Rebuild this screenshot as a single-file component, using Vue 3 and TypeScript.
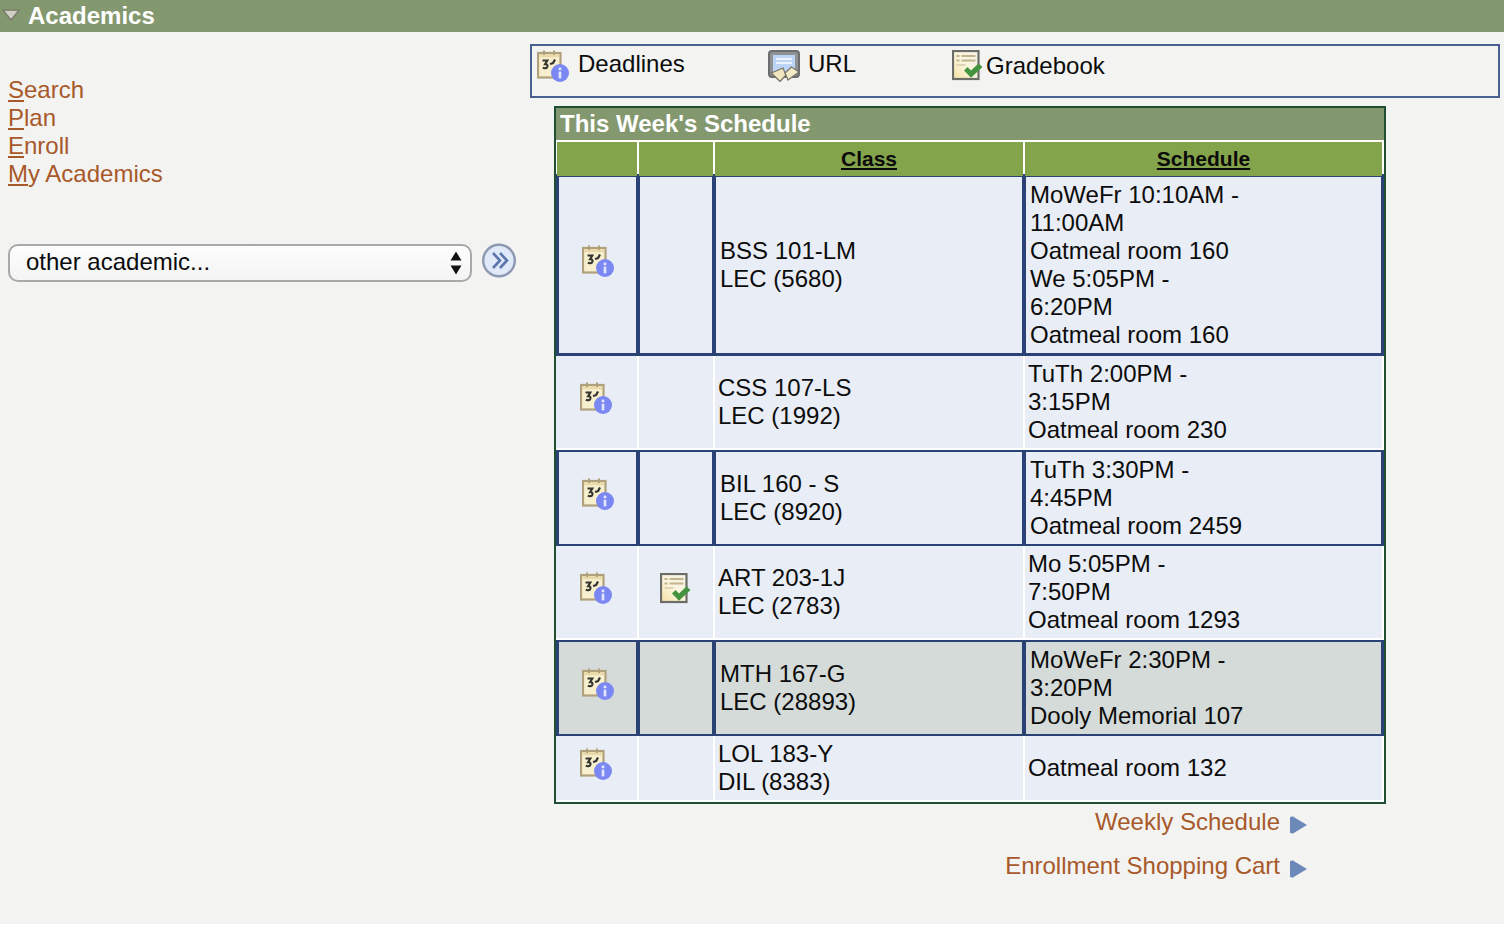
<script setup lang="ts">
interface Row {
  lines: string[];
  schedule: string[];
  kind: string;
  grade?: boolean;
}
const rows: Row[] = [
  { lines: ['BSS 101-LM', 'LEC (5680)'], schedule: ['MoWeFr 10:10AM -', '11:00AM', 'Oatmeal room 160', 'We 5:05PM -', '6:20PM', 'Oatmeal room 160'], kind: 'hl first' },
  { lines: ['CSS 107-LS', 'LEC (1992)'], schedule: ['TuTh 2:00PM -', '3:15PM', 'Oatmeal room 230'], kind: 'plain' },
  { lines: ['BIL 160 - S', 'LEC (8920)'], schedule: ['TuTh 3:30PM -', '4:45PM', 'Oatmeal room 2459'], kind: 'hl' },
  { lines: ['ART 203-1J', 'LEC (2783)'], schedule: ['Mo 5:05PM -', '7:50PM', 'Oatmeal room 1293'], kind: 'plain', grade: true },
  { lines: ['MTH 167-G', 'LEC (28893)'], schedule: ['MoWeFr 2:30PM -', '3:20PM', 'Dooly Memorial 107'], kind: 'hl gray' },
  { lines: ['LOL 183-Y', 'DIL (8383)'], schedule: ['Oatmeal room 132'], kind: 'plain' },
];
const navLinks = [
  { first: 'S', rest: 'earch' },
  { first: 'P', rest: 'lan' },
  { first: 'E', rest: 'nroll' },
  { first: 'M', rest: 'y', tail: ' Academics' },
];
</script>

<template>
  <svg class="defs" width="0" height="0" aria-hidden="true">
    <defs>
      <linearGradient id="paper" x1="0" y1="1" x2="1" y2="0">
        <stop offset="0" stop-color="#f5e2a2" />
        <stop offset="0.5" stop-color="#fbf5de" />
        <stop offset="1" stop-color="#f3f0e6" />
      </linearGradient>
      <symbol id="cal" viewBox="0 0 32 32">
        <rect x="1" y="3" width="22.5" height="24.5" fill="#f8efcf" stroke="#b1a07c" stroke-width="2.2" />
        <rect x="2.2" y="4.2" width="20" height="3" fill="#ead9a9" />
        <path d="M7 0.5V5M17 0.5V5" stroke="#b1a07c" stroke-width="2" />
        <path d="M5.5 10.5h4.8l-2.2 3.6c2.2 0 2.7 1.2 2.3 2.6-.4 1.5-2.6 1.9-4.6 1.1" fill="none" stroke="#35352f" stroke-width="2.1" />
        <path d="M13 14l3.5-1M18 9.5l-2 3.6" fill="none" stroke="#333" stroke-width="2.2" />
        <circle cx="23" cy="23" r="9" fill="#7b88f3" />
        <rect x="21.7" y="17.6" width="2.6" height="2.6" fill="#e4e8ff" />
        <rect x="21.7" y="21.6" width="2.6" height="6.8" fill="#e4e8ff" />
      </symbol>
      <symbol id="grade" viewBox="0 0 31 31">
        <rect x="1" y="1" width="25.5" height="28" fill="url(#paper)" stroke="#6c6c68" stroke-width="2.2" />
        <path d="M4.5 6h3M9.5 6h14M4.5 10.5h3M9.5 10.5h14" stroke="#c2b48d" stroke-width="2.2" />
        <path d="M4.5 15h9" stroke="#d9cfae" stroke-width="1.6" />
        <path d="M12 20.5L15.5 17 19 20.5 26.5 13.5 30.5 17 19 27.8z" fill="#43933f" />
      </symbol>
      <symbol id="url" viewBox="0 0 32 32">
        <rect x="1" y="1" width="30" height="26" rx="3" fill="#8f9192" stroke="#6b6d6f" stroke-width="2" />
        <rect x="5" y="5" width="22" height="18" fill="#bcd4f5" />
        <path d="M8 9h16M8 13h16" stroke="#eef4fd" stroke-width="2" />
        <path d="M3.3 23L15 18 18 25 12 31.5z" fill="#f0e6bd" stroke="#77756a" stroke-width="1.3" />
        <path d="M17 23L23.5 17 31 22 20 30z" fill="#f4ecc9" stroke="#77756a" stroke-width="1.3" />
      </symbol>
      <symbol id="tri" viewBox="0 0 17 18">
        <path d="M0 1.2L2.5 0.3 17 9 2.5 17.7 0 16.8z" fill="#6d89ba" />
      </symbol>
    </defs>
  </svg>

  <div class="page">
    <header class="band">
      <svg class="caret" width="18" height="12" viewBox="0 0 18 12">
        <path d="M1 1.2h16L9 11z" fill="#cfcfc3" stroke="#77776a" stroke-width="1.3" />
      </svg>
      <span>Academics</span>
    </header>

    <div class="main">
      <aside class="side">
        <nav class="nav">
          <a v-for="l in navLinks" :key="l.first" class="link"><u>{{ l.first }}</u>{{ l.rest }}{{ l.tail }}</a>
        </nav>
        <div class="picker">
          <div class="select-wrap">
            <span class="select-text">other academic...</span>
            <svg class="updown" width="12" height="24" viewBox="0 0 12 24">
              <path d="M6 0.5L11.5 9.5H0.5zM0.5 14.5H11.5L6 23.5z" fill="#111" />
            </svg>
          </div>
          <svg class="go" width="34" height="36" viewBox="0 0 34 36">
            <circle cx="17" cy="17.5" r="15.8" fill="#e0e9f8" stroke="#8d99b3" stroke-width="2.4" />
            <path d="M11 10l7 7.5-7 7.5M18 10l7 7.5-7 7.5" fill="none" stroke="#5b76ab" stroke-width="2.6" />
          </svg>
        </div>
      </aside>

      <section class="content">
        <div class="toolbar">
          <div class="tool tool-a"><svg class="ic32"><use href="#cal" /></svg><span>Deadlines</span></div>
          <div class="tool tool-b"><svg class="ic32"><use href="#url" /></svg><span>URL</span></div>
          <div class="tool tool-c"><svg class="ic-g"><use href="#grade" /></svg><span class="low">Gradebook</span></div>
        </div>

        <div class="table">
          <div class="title">This Week's Schedule</div>
          <div class="row head">
            <div class="cell"></div>
            <div class="cell"></div>
            <div class="cell"><u>Class</u></div>
            <div class="cell"><u>Schedule</u></div>
          </div>
          <div v-for="r in rows" :key="r.lines[0]" class="row body" :class="r.kind">
            <div class="cell center"><svg class="ic32 lift"><use href="#cal" /></svg></div>
            <div class="cell center"><svg v-if="r.grade" class="ic-g lift"><use href="#grade" /></svg></div>
            <div class="cell text"><div v-for="t in r.lines" :key="t">{{ t }}</div></div>
            <div class="cell text"><div v-for="(t, i) in r.schedule" :key="i">{{ t }}</div></div>
          </div>
        </div>

        <div class="more">
          <div class="more-item"><a class="link">Weekly Schedule</a><svg class="tri"><use href="#tri" /></svg></div>
          <div class="more-item"><a class="link">Enrollment Shopping Cart</a><svg class="tri"><use href="#tri" /></svg></div>
        </div>
      </section>
    </div>
  </div>
</template>

<style>
html, body { background: #fff; }
</style>

<style scoped>
.defs { position: absolute; }
.page {
  width: 1504px;
  height: 924px;
  background: #f3f3f1;
  font-family: "Liberation Sans", Arial, sans-serif;
  font-size: 24px;
  line-height: 28px;
  color: #0c0c0c;
  overflow: hidden;
}
.band {
  height: 32px;
  background: #84986f;
  color: #fff;
  font-weight: 700;
  display: flex;
  align-items: center;
  box-sizing: border-box;
  padding-left: 2px;
}
.band span { margin-left: 8px; }
.caret { margin-top: -3px; }
.main { display: flex; }
.side { width: 530px; flex: none; padding: 44px 0 0 8px; box-sizing: border-box; }
.nav { display: flex; flex-direction: column; align-items: flex-start; }
.link { color: #a8592a; }
.picker { display: flex; gap: 10px; margin-top: 56px; align-items: flex-start; }
.select-wrap {
  position: relative;
  width: 464px;
  height: 38px;
  box-sizing: border-box;
  border: 2px solid #a9a9a9;
  border-radius: 10px;
  background: linear-gradient(#fdfdfd, #f4f4f4);
  padding: 2px 0 0 16px;
}
.updown { position: absolute; right: 8px; top: 5px; }
.go { flex: none; margin-top: -1px; }
.content { flex: 1; padding-top: 12px; }
.toolbar {
  width: 970px;
  height: 54px;
  box-sizing: border-box;
  border: 2px solid #4a5f92;
  display: flex;
  padding: 4px 0 0 5px;
}
.tool { display: flex; align-items: flex-start; }
.tool-a { width: 231px; gap: 9px; }
.tool-b { width: 184px; gap: 8px; }
.tool-c { gap: 3px; }
.low { margin-top: 2px; }
.ic32 { width: 32px; height: 32px; flex: none; display: block; }
.ic-g { width: 31px; height: 31px; flex: none; display: block; }
.table {
  width: 832px;
  box-sizing: border-box;
  margin: 8px 0 0 24px;
  border: 2px solid #1f4f33;
  background: #fff;
  padding-bottom: 2px;
}
.title {
  height: 32px;
  background: #84986f;
  color: #fff;
  font-weight: 700;
  padding-left: 4px;
  margin-bottom: 2px;
  line-height: 32px;
}
.row {
  display: grid;
  grid-template-columns: 81px 74px 308px 357px;
  column-gap: 2px;
  padding-right: 2px;
}
.head { height: 32px; grid-template-columns: 80px 74px 308px 357px; padding-left: 1px; }
.head .cell {
  background: #84a44c;
  color: #0a0a0a;
  font-weight: 700;
  font-size: 21px;
  line-height: 34px;
  text-align: center;
}
.body .cell { background: #e9edf5; }
.center { display: flex; align-items: center; justify-content: center; }
.lift { margin-bottom: 8px; }
.plain .lift { margin-right: 1px; }
.text {
  padding: 4px 3px;
  display: flex;
  flex-direction: column;
  justify-content: center;
}
.body.plain { padding-bottom: 2px; }
.body.plain:last-child { padding-bottom: 0; }
.body.hl {
  background: #2a4276;
  grid-template-columns: 77px 72px 306px 355px;
  column-gap: 4px;
  padding: 2px 3px;
}
.body.hl.first { padding-top: 3px; padding-bottom: 3px; }
.body.hl.gray .cell { background: #d4dbd9; }
.body.hl .text { padding-left: 4px; }
.more { display: flex; flex-direction: column; align-items: flex-end; padding: 4px 197px 0 0; }
.more-item { display: flex; align-items: flex-start; gap: 10px; height: 44px; }
.tri { width: 17px; height: 18px; margin-top: 8px; flex: none; }
</style>
